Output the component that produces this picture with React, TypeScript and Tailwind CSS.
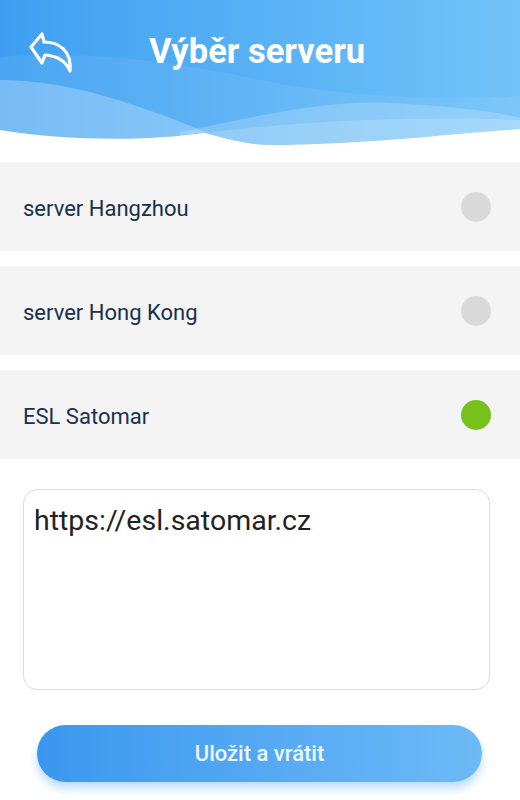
import { useState } from 'react'

const servers = [
  { id: 'hz', name: 'server Hangzhou' },
  { id: 'hk', name: 'server Hong Kong' },
  { id: 'esl', name: 'ESL Satomar' },
]

function BackIcon() {
  return (
    <svg className="w-[46px] h-[44px]" viewBox="0 0 46 44" fill="none">
      <path
        d="M3 17 L14 4 L16 12 C30 12 44 20 42 41 C38 31 30 26 17 25 L14 33 Z"
        stroke="white"
        strokeWidth={3.2}
        strokeLinejoin="round"
        strokeLinecap="round"
      />
    </svg>
  )
}

function Waves() {
  return (
    <svg className="absolute inset-0 w-full h-full" viewBox="0 0 520 150" preserveAspectRatio="none">
      <defs>
        <linearGradient id="hdr" x1="0" y1="0" x2="1" y2="0">
          <stop offset="0" stopColor="#3e9ff2" />
          <stop offset="1" stopColor="#72c3f9" />
        </linearGradient>
      </defs>
      <rect width="520" height="150" fill="url(#hdr)" />
      <path d="M0 57 C80 50 170 60 260 80 C350 98 440 100 520 96 L520 150 L0 150 Z" fill="white" opacity="0.07" />
      <path d="M0 80 C70 80 140 105 210 134 L0 150 Z" fill="white" opacity="0.25" />
      <path d="M180 132 C260 115 330 100 390 103 C450 106 500 112 520 118 L520 150 L180 150 Z" fill="white" opacity="0.2" />
      <path d="M200 134 C300 120 420 116 520 120 L520 150 L200 150 Z" fill="white" opacity="0.16" />
      <path d="M0 130 C60 140 140 142 205 133 C230 140 250 145 270 145 C360 145 450 134 520 129 L520 150 L0 150 Z" fill="white" />
    </svg>
  )
}

export default function App() {
  const [selected, setSelected] = useState('esl')
  const [url, setUrl] = useState('https://esl.satomar.cz')

  return (
    <div className="w-[520px] h-[800px] bg-white overflow-hidden" style={{ fontFamily: 'Roboto, "Liberation Sans", sans-serif' }}>
      <div className="relative h-[150px]">
        <Waves />
        <div className="relative flex items-center h-[104px] pl-[28px]">
          <BackIcon />
          <h1 className="ml-[75px] text-[34.5px] font-bold text-white">Výběr serveru</h1>
        </div>
      </div>

      <div className="flex flex-col gap-[15px] mt-[12px]">
        {servers.map((s) => (
          <button
            key={s.id}
            onClick={() => setSelected(s.id)}
            className="flex items-center justify-between h-[89px] bg-[#f4f4f4] pl-[23px] pr-[29px] text-left"
          >
            <span className="text-[22px] text-[#18304e] pt-[3px]">{s.name}</span>
            <span
              className={
                selected === s.id
                  ? 'w-[30px] h-[30px] rounded-full bg-[#77c11b]'
                  : 'w-[30px] h-[30px] rounded-full bg-[#d9d9d9]'
              }
            />
          </button>
        ))}
      </div>

      <div className="mt-[30px] ml-[23px] mr-[30px]">
        <textarea
          value={url}
          onChange={(e) => setUrl(e.target.value)}
          className="block w-full h-[201px] resize-none rounded-[14px] border border-[#dcdcdc] px-[10px] py-[14px] text-[28.5px] leading-[34px] text-[#222] outline-none"
        />
      </div>

      <div className="mt-[35px] ml-[37px] mr-[38px]">
        <button className="w-full h-[57px] rounded-full bg-gradient-to-r from-[#3a97ef] to-[#6cbaf7] text-[22px] font-medium text-[#eef6fe] shadow-[0_6px_10px_rgba(58,151,239,0.35)]">
          Uložit a vrátit
        </button>
      </div>
    </div>
  )
}
